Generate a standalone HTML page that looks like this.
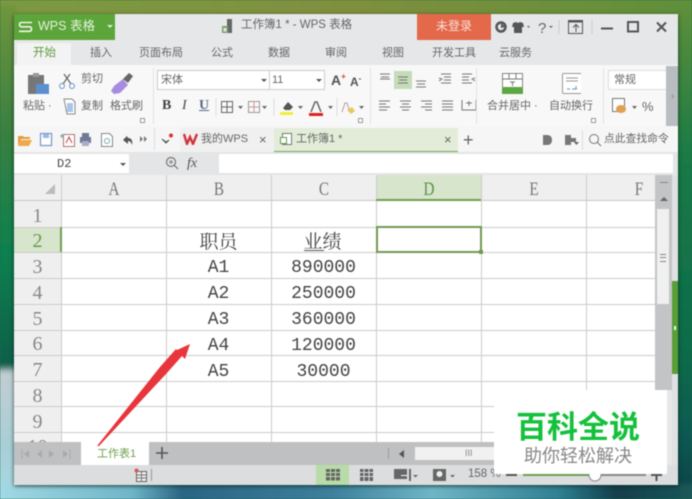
<!DOCTYPE html>
<html><head><meta charset="utf-8">
<style>
html,body{margin:0;padding:0;width:692px;height:499px;overflow:hidden}
body{position:relative;font-family:"Liberation Sans","Noto Sans CJK SC",sans-serif;background:#1c6a4c}
#w{position:absolute;left:0;top:0;width:692px;height:499px;overflow:hidden;filter:blur(.45px)}
.a{position:absolute;white-space:nowrap;line-height:1}
.b{position:absolute}
.t{font-size:11px;color:#666}
.s{font-family:"Liberation Serif","Noto Serif CJK SC",serif;color:#444}
.h{font-size:19px;color:#777;font-family:"Liberation Serif",serif;transform:scaleX(.8);width:40px;text-align:center}
.r{font-size:20px;color:#888;font-family:"Liberation Serif",serif;width:47px;left:14px;text-align:center}
.c{font-size:18px;color:#444;font-family:"Liberation Mono","Noto Serif CJK SC",monospace;width:105px;text-align:center}
.z{font-family:"Liberation Serif","Noto Serif CJK SC",serif;font-size:19px;color:#444}
.hl{position:absolute;left:14px;width:642px;height:1px;background:#ccc}
.vl{position:absolute;top:175px;width:1px;height:267px;background:#ccc}
.k{position:absolute;width:3px;height:3px;border:1px solid #999;background:#fff}
</style></head><body><div id="w">
<svg class="b" style="left:0;top:0" width="692" height="499">
<defs>
<filter id="bl"><feGaussianBlur stdDeviation="2.500"/></filter>
<linearGradient id="g1" x1="0" x2="1"><stop offset="0" stop-color="#7b9a42"/><stop offset=".5" stop-color="#808f3e"/><stop offset="1" stop-color="#5e8f3a"/></linearGradient>
<linearGradient id="g2" x1="0" y1="0" x2="0" y2="1"><stop offset="0" stop-color="#5f8f3a"/><stop offset=".3" stop-color="#1a7a45"/><stop offset=".7" stop-color="#0b6b4a"/><stop offset=".85" stop-color="#0e5a52"/><stop offset="1" stop-color="#103f48"/></linearGradient>
<linearGradient id="g3" x1="0" y1="0" x2="0" y2="1"><stop offset="0" stop-color="#6f953c"/><stop offset=".25" stop-color="#3a8040"/><stop offset=".5" stop-color="#0d8050"/><stop offset=".72" stop-color="#0a5f48"/><stop offset=".735" stop-color="#c2cdd2"/><stop offset=".88" stop-color="#a8ced6"/><stop offset="1" stop-color="#a5dbe6"/></linearGradient>
<linearGradient id="g4" x1="0" x2="1"><stop offset="0" stop-color="#a5dbe6"/><stop offset=".2" stop-color="#6fb5c8"/><stop offset=".27" stop-color="#2a6484"/><stop offset=".48" stop-color="#3d7f9c"/><stop offset=".62" stop-color="#70b5c6"/><stop offset=".8" stop-color="#2f7f92"/><stop offset=".88" stop-color="#123e4a"/><stop offset="1" stop-color="#1c5a5c"/></linearGradient>
</defs>
<g filter="url(#bl)">
<rect x="-10" y="-10" width="712" height="36" fill="url(#g1)"/>
<rect x="-10" y="5" width="26" height="500" fill="url(#g3)"/>
<rect x="676" y="5" width="26" height="500" fill="url(#g2)"/>
<rect x="-10" y="484" width="712" height="26" fill="url(#g4)"/>
</g>
</svg>
<!-- window -->
<div class="b" style="left:14px;top:14px;width:664px;height:471px;background:#e6e7e8;box-shadow:0 1px 4px rgba(0,0,0,.55)"></div>
<!-- title -->
<div class="b" style="left:14px;top:14px;width:101px;height:26px;background:#5ba53a"></div>
<svg class="b" style="left:18px;top:21px" width="16" height="12"><path d="M14 1.500H3.500Q1.500 1.500 1.500 3.500T3.500 5.800H11.500Q13.500 5.800 13.500 8T11.500 10.300H1" fill="none" stroke="#eef5e6" stroke-width="1.600"/></svg>
<div class="a" style="left:38px;top:20px;font-size:12.500px;color:#e6f2dc">WPS 表格</div>
<div class="b" style="left:107px;top:25px;border:3px solid transparent;border-top:3px solid #dbeccd"></div>
<svg class="b" style="left:221px;top:19px" width="14" height="15"><path d="M6 0h5v14H6z" fill="#666"/><path d="M1 7h6v7H1z" fill="#7f9f6e"/><path d="M2.500 9h3v3.500h-3z" fill="#e4e5e6"/></svg>
<div class="a t" style="left:241px;top:20px;font-size:11.500px">工作簿1 * - WPS 表格</div>
<div class="b" style="left:417px;top:14px;width:74px;height:26px;background:#e3694a"></div>
<div class="a" style="left:436px;top:20px;font-size:12px;color:#f8e0d8">未登录</div>
<svg class="b" style="left:495px;top:17px" width="180" height="20">
<circle cx="6" cy="10" r="4.500" fill="none" stroke="#555" stroke-width="2.500"/><path d="M6 6l4 4-4 1z" fill="#555"/>
<path d="M18 6l3-1 2 1 2-1 3 1 1 4-2 0v6h-8v-6h-2z" fill="#555"/><path d="M32 9h3l-1.500 2z" fill="#666"/>
<text x="43" y="16" font-size="15" fill="#666" font-family="Liberation Sans">?</text><path d="M54 9h4l-2 2z" fill="#666"/>
<path d="M64 3v14" stroke="#ccc"/>
<rect x="73.500" y="3.500" width="14" height="13" fill="none" stroke="#555"/><path d="M74 3.500h14v2H74z" fill="#555"/><path d="M81 15V8M78 10.500l3-3 3 3" fill="none" stroke="#555"/>
<path d="M97 3v14" stroke="#ccc"/>
<path d="M106 11.500h12" stroke="#555" stroke-width="2"/>
<rect x="133" y="5" width="10" height="9.500" fill="none" stroke="#555" stroke-width="2"/>
<path d="M162 5.500l9 9M171 5.500l-9 9" stroke="#555" stroke-width="2"/>
</svg>
<!-- tabs -->
<div class="b" style="left:17px;top:43px;width:54px;height:23px;background:#f2f3f2"></div>
<div class="a" style="left:33px;top:48px;font-size:11.500px;color:#5c9a3c">开始</div>
<div class="a t" style="left:90px;top:48px">插入</div>
<div class="a t" style="left:139px;top:48px">页面布局</div>
<div class="a t" style="left:211px;top:48px">公式</div>
<div class="a t" style="left:268px;top:48px">数据</div>
<div class="a t" style="left:325px;top:48px">审阅</div>
<div class="a t" style="left:382px;top:48px">视图</div>
<div class="a t" style="left:432px;top:48px">开发工具</div>
<div class="a t" style="left:499px;top:48px">云服务</div>
<!-- ribbon -->
<div class="b" style="left:14px;top:65px;width:664px;height:61px;background:#f8f8f8"></div>
<div class="b" style="left:666px;top:66px;width:12px;height:60px;background:#b9bcc0"></div>
<svg class="b" style="left:26px;top:70px" width="125" height="50">
<path d="M2 5h16v19H2z" fill="#777"/><path d="M7 3h6v4H7z" fill="#999"/><path d="M10 14h13v10H10z" fill="#5b8fd0"/>
<path d="M38 4l7 10M44 4l-7 10" stroke="#666" stroke-width="1.200"/><circle cx="36" cy="16" r="2.500" fill="none" stroke="#6b93c8"/><circle cx="46" cy="16" r="2.500" fill="none" stroke="#6b93c8"/>
<path d="M88 16l9-7 5 6-8 8-6 1-3-3z" fill="#a88be0"/><path d="M97 9l6-6 4 3-5 7z" fill="#666"/>
<path d="M38 29h8l3 3v12h-8z" fill="#fff" stroke="#888"/><path d="M41 33h6v9h-6z" fill="#a8c6ea"/>
</svg>
<div class="a t" style="left:23px;top:101px">粘贴 ·</div>
<div class="a t" style="left:81px;top:74px">剪切</div>
<div class="a t" style="left:81px;top:101px">复制</div>
<div class="a t" style="left:110px;top:101px">格式刷</div>
<div class="b" style="left:153px;top:68px;width:1px;height:56px;background:#e2e2e2"></div>
<div class="b" style="left:157px;top:70px;width:168px;height:20px;background:#fff;border:1px solid #ccc;box-sizing:border-box"></div>
<div class="b" style="left:269px;top:70px;width:1px;height:20px;background:#ccc"></div>
<div class="a t" style="left:161px;top:75px">宋体</div>
<div class="a t" style="left:272px;top:75px">11</div>
<div class="b" style="left:261px;top:79px;border:3px solid transparent;border-top:3px solid #555"></div>
<div class="b" style="left:316px;top:79px;border:3px solid transparent;border-top:3px solid #555"></div>
<div class="a" style="left:331px;top:73px;font-size:14px;font-weight:bold;color:#555">A<span style="font-size:8px;vertical-align:6px;color:#c44">+</span></div>
<div class="a" style="left:350px;top:75px;font-size:12px;font-weight:bold;color:#555">A<span style="font-size:8px;vertical-align:5px">-</span></div>
<div class="a s" style="left:162px;top:99px;font-size:14px;font-weight:bold">B</div>
<div class="a s" style="left:182px;top:99px;font-size:14px;font-style:italic">I</div>
<div class="a s" style="left:199px;top:99px;font-size:14px;font-weight:bold;text-decoration:underline;color:#5a6a88">U</div>
<svg class="b" style="left:215px;top:96px" width="150" height="22">
<path d="M1 2v18" stroke="#ddd"/><rect x="6.500" y="5.500" width="11" height="11" fill="none" stroke="#666"/><path d="M12 5v12M6 11h12" stroke="#666"/><path d="M23 10h5l-2.500 3z" fill="#666"/>
<rect x="33.500" y="5.500" width="11" height="11" fill="none" stroke="#999"/><path d="M39 5v12M33 11h12" stroke="#c99"/><path d="M47 10h5l-2.500 3z" fill="#666"/>
<path d="M59 2v18" stroke="#ddd"/>
<path d="M68 12l5-6 5 5-3 3h-5z" fill="#555"/><path d="M65 16h13v3H65z" fill="#f1ef3a"/><path d="M83 10h5l-2.500 3z" fill="#666"/>
<path d="M96 16l4-10h2l4 10" fill="none" stroke="#666" stroke-width="1.500"/><path d="M94 17h14v3H94z" fill="#d22"/><path d="M113 10h5l-2.500 3z" fill="#666"/>
<path d="M122 2v18" stroke="#ddd"/>
<path d="M127 16l3-9h2l3 9" fill="none" stroke="#b99"/><path d="M132 14l5-3 3 4-4 3z" fill="#e8c860"/><path d="M144 10h5l-2.500 3z" fill="#666"/>
</svg>
<div class="b" style="left:370px;top:68px;width:1px;height:56px;background:#e2e2e2"></div>
<div class="b" style="left:394px;top:71px;width:18px;height:18px;background:#c4dcb8"></div>
<svg class="b" style="left:378px;top:70px" width="100" height="50" stroke="#777" fill="none">
<path d="M2 4h10M3 7h8M2 9h10M20 7h10M21 10h8M20 13h10M38 11h10M39 14h8M38 17h10"/>
<path d="M63 4h10M66 7h7M66 10h7M63 13h10M61 8l3 1-3 2M84 4h10M84 7h7M84 10h7M84 13h10M97 8l-3 1 3 2"/>
<path d="M1 31h11M1 34h7M1 37h11M1 40h8M22 31h11M24 34h7M22 37h11M24 40h7M43 31h11M47 34h7M43 37h11M47 40h7M64 31h11M64 34h11M64 37h11M64 40h11"/>
<path d="M84 30v10h14V30M84 40h14M88 33h6M91 31v5"/>
</svg>
<div class="b" style="left:476px;top:68px;width:1px;height:56px;background:#e2e2e2"></div>
<svg class="b" style="left:501px;top:71px" width="80" height="25">
<rect x="1.500" y="2.500" width="20" height="20" fill="#fff" stroke="#888"/><path d="M1 16h21v7H1z" fill="#5ea544"/><path d="M1 8h21M8 2v6M15 2v6M9 11h5M11.500 11v4" stroke="#777" fill="none"/>
<rect x="61.500" y="2.500" width="19" height="20" rx="1" fill="#fff" stroke="#999"/><path d="M65 7h12M65 10h12" stroke="#999"/><path d="M66 18h3M71 18h5M75 15v3" stroke="#6b93c8"/>
</svg>
<div class="a t" style="left:487px;top:101px">合并居中 ·</div>
<div class="a t" style="left:549px;top:101px">自动换行</div>
<div class="b" style="left:603px;top:68px;width:1px;height:56px;background:#e2e2e2"></div>
<div class="b" style="left:608px;top:70px;width:58px;height:20px;background:#fff;border:1px solid #ddd;border-right:0;box-sizing:border-box"></div>
<div class="a t" style="left:614px;top:75px">常规</div>
<svg class="b" style="left:611px;top:97px" width="30" height="20"><rect x="1.500" y="1.500" width="12" height="13" fill="#fff" stroke="#777"/><ellipse cx="10" cy="12" rx="5" ry="4" fill="#e0a050"/><path d="M21 9h5l-2.500 3z" fill="#666"/></svg>
<div class="a t" style="left:642px;top:100px;font-size:13px">%</div>
<div class="a" style="left:671px;top:92px;font-size:10px;color:#888">›</div>
<div class="k" style="left:140px;top:118px"></div>
<div class="k" style="left:358px;top:118px"></div>
<div class="k" style="left:591px;top:118px"></div>
<!-- quick access -->
<div class="b" style="left:14px;top:126px;width:664px;height:26px;background:#f6f6f6"></div>
<div class="b" style="left:180px;top:128px;width:94px;height:24px;background:#f0f0f0"></div>
<div class="b" style="left:274px;top:128px;width:184px;height:24px;background:#e2ecd8;border-bottom:1.500px solid #79a65c;box-sizing:border-box"></div>
<svg class="b" style="left:17px;top:131px" width="150" height="17">
<path d="M1 5h5l1 1h6v2H4l-3 6z" fill="#e29b3e"/><path d="M3 9h12l-3 6H1z" fill="#efa84a"/>
<rect x="23.500" y="2.500" width="11" height="12" fill="#fff" stroke="#7d9bcf" stroke-width="1.300"/><path d="M26 3h6v4h-6z" fill="#9fb7de"/>
<rect x="46.500" y="3.500" width="11" height="12" fill="#fff" stroke="#a77"/><path d="M43 5h4M45 3v4" stroke="#6a9"/><path d="M49 12l3-6 3 6" fill="none" stroke="#c44"/>
<path d="M65 2h7v4h-7zM63 6h11v6h-11z" fill="#707898"/><path d="M65 10h7v5h-7z" fill="#a8aec4"/>
<path d="M84.500 2.500h8l3 3v10h-11z" fill="#fff" stroke="#888"/><circle cx="90" cy="10" r="2.500" fill="none" stroke="#7aa"/>
<path d="M106 9l4-4 1 2c3 0 5 2 4 7-1-3-2-4-4-4l0 3z" fill="#555"/>
<path d="M123 5l3 3-3 3zM127 5l3 3-3 3z" fill="#777"/>
</svg>
<div class="b" style="left:154px;top:128px;width:1px;height:22px;background:#ddd"></div>
<svg class="b" style="left:160px;top:132px" width="14" height="14"><path d="M2 7l4 3 3-2-3 3z" fill="#555" stroke="#555"/><circle cx="11" cy="3.500" r="2" fill="#d33"/></svg>
<svg class="b" style="left:183px;top:133px" width="15" height="12"><path d="M1 1l3 10 3-7 3 7 4-10" fill="none" stroke="#d4343c" stroke-width="2.400"/></svg>
<div class="a t" style="left:201px;top:134px">我的WPS</div>
<div class="a" style="left:259px;top:133px;font-size:13px;color:#666">×</div>
<svg class="b" style="left:279px;top:132px" width="14" height="14"><rect x="3.500" y="1.500" width="9" height="11" fill="#fff" stroke="#777"/><rect x="1.500" y="5.500" width="6" height="6" fill="#fff" stroke="#6a9a50"/></svg>
<div class="a t" style="left:296px;top:134px">工作簿1 *</div>
<div class="a" style="left:444px;top:133px;font-size:13px;color:#666">×</div>
<div class="a" style="left:463px;top:131px;font-size:18px;color:#666">+</div>
<svg class="b" style="left:541px;top:133px" width="44" height="14"><path d="M2 2h4q5 0 5 5t-5 5H2z" fill="#777"/><path d="M24 2h6v10h-6zM30 5h5v4h-5z" fill="#777"/><path d="M33 9h5l-2.500 3z" fill="#666"/></svg>
<div class="b" style="left:582px;top:130px;width:1px;height:20px;background:#ddd"></div>
<svg class="b" style="left:588px;top:133px" width="14" height="14"><circle cx="6" cy="6" r="4.500" fill="none" stroke="#777"/><path d="M9 9l4 4" stroke="#777"/></svg>
<div class="a t" style="left:604px;top:134px;font-size:10.800px">点此查找命令</div>
<!-- formula bar -->
<div class="b" style="left:14px;top:152px;width:664px;height:23px;background:#e4e5e6"></div>
<div class="b" style="left:14px;top:154px;width:115px;height:19px;background:#fff"></div>
<div class="b" style="left:219px;top:154px;width:454px;height:19px;background:#fff"></div>
<div class="a s" style="left:57px;top:158px;font-size:12px;font-family:'Liberation Mono'">D2</div>
<div class="b" style="left:120px;top:163px;border:3px solid transparent;border-top:3px solid #555"></div>
<svg class="b" style="left:165px;top:156px" width="14" height="14"><circle cx="6" cy="6" r="4.500" fill="none" stroke="#777" stroke-width="1.200"/><path d="M9 9l4 4" stroke="#777" stroke-width="1.200"/><circle cx="6" cy="6" r="1.800" fill="#999"/></svg>
<div class="a" style="left:187px;top:156px;font:italic 14px 'Liberation Serif',serif;color:#555">fx</div>
<!-- grid -->
<div class="b" style="left:14px;top:175px;width:642px;height:267px;background:#fff"></div>
<div class="b" style="left:14px;top:175px;width:642px;height:25px;background:#efeff0"></div>
<div class="b" style="left:14px;top:200px;width:48px;height:242px;background:#efeff0"></div>
<div class="b" style="left:14px;top:227px;width:47px;height:25px;background:#d6e5cc"></div>
<div class="b" style="left:376px;top:175px;width:105px;height:25px;background:#d6e5cc"></div>
<svg class="b" style="left:44px;top:183px" width="12" height="12"><path d="M11 1v10H1z" fill="#bbb"/></svg>
<div class="hl" style="top:200px;background:#c8c8c8"></div>
<div class="hl" style="top:227px"></div>
<div class="hl" style="top:252px"></div>
<div class="hl" style="top:278px"></div>
<div class="hl" style="top:304px"></div>
<div class="hl" style="top:330px"></div>
<div class="hl" style="top:355px"></div>
<div class="hl" style="top:381px"></div>
<div class="hl" style="top:406px"></div>
<div class="hl" style="top:432px"></div>
<div class="vl" style="left:61px"></div>
<div class="vl" style="left:166px"></div>
<div class="vl" style="left:271px"></div>
<div class="vl" style="left:376px"></div>
<div class="vl" style="left:481px"></div>
<div class="vl" style="left:586px"></div>
<div class="b" style="left:376px;top:199px;width:105px;height:2px;background:#70a050"></div>
<div class="b" style="left:60px;top:227px;width:2px;height:25px;background:#70a050"></div>
<div class="a h" style="left:94px;top:180px">A</div>
<div class="a h" style="left:199px;top:180px">B</div>
<div class="a h" style="left:304px;top:180px">C</div>
<div class="a h" style="left:409px;top:180px;color:#5f8f48">D</div>
<div class="a h" style="left:514px;top:180px">E</div>
<div class="a h" style="left:619px;top:180px">F</div>
<div class="a r" style="top:206px">1</div>
<div class="a r" style="top:231px;color:#6a9a50">2</div>
<div class="a r" style="top:257px">3</div>
<div class="a r" style="top:283px">4</div>
<div class="a r" style="top:309px">5</div>
<div class="a r" style="top:334px">6</div>
<div class="a r" style="top:360px">7</div>
<div class="a r" style="top:386px">8</div>
<div class="a r" style="top:412px">9</div>
<div class="a r" style="top:437px;height:5px;overflow:hidden">10</div>
<div class="a c z" style="left:166px;top:233px;font-size:19px">职员</div>
<div class="a c z" style="left:270px;top:233px;font-size:19px">业绩</div>
<div class="b" style="left:304px;top:250px;width:20px;height:1px;background:#555"></div>
<div class="a c" style="left:166px;top:259px">A1</div><div class="a c" style="left:271px;top:259px">890000</div>
<div class="a c" style="left:166px;top:285px">A2</div><div class="a c" style="left:271px;top:285px">250000</div>
<div class="a c" style="left:166px;top:311px">A3</div><div class="a c" style="left:271px;top:311px">360000</div>
<div class="a c" style="left:166px;top:337px">A4</div><div class="a c" style="left:271px;top:337px">120000</div>
<div class="a c" style="left:166px;top:363px">A5</div><div class="a c" style="left:271px;top:363px">30000</div>
<div class="b" style="left:376px;top:226px;width:106px;height:27px;border:2px solid #6f9a50;box-sizing:border-box"></div>
<div class="b" style="left:479px;top:250px;width:4px;height:4px;background:#6f9a50"></div>
<!-- vertical scrollbar -->
<div class="b" style="left:655px;top:175px;width:17px;height:215px;background:#c3c4c5"></div>
<div class="b" style="left:672px;top:175px;width:6px;height:290px;background:#e0e1e2"></div>
<div class="b" style="left:657px;top:209px;width:12px;height:95px;background:#f0f0f1"></div>
<div class="b" style="left:660px;top:182px;width:8px;height:1px;background:#888"></div>
<div class="b" style="left:660px;top:197px;border:4px solid transparent;border-bottom:4px solid #666;border-top:0"></div>
<div class="b" style="left:660px;top:254px;width:6px;height:6px;border-top:1px solid #888;border-bottom:1px solid #888"></div>
<div class="b" style="left:660px;top:257px;width:6px;height:1px;background:#888"></div>
<div class="b" style="left:672px;top:281px;width:6px;height:93px;background:#5a9e38"></div>
<div class="b" style="left:674px;top:326px;width:2px;height:4px;background:#dfe"></div>
<!-- sheet bar -->
<div class="b" style="left:14px;top:442px;width:642px;height:23px;background:#bfc0c1"></div>
<div class="b" style="left:81px;top:442px;width:68px;height:23px;background:#fff"></div>
<svg class="b" style="left:20px;top:447px" width="56" height="14" fill="#aaa"><path d="M2 2v10" stroke="#aaa"/><path d="M9 3v8l-5-4zM22 3v8l-5-4zM29 3v8l5-4zM43 3v8l5-4z"/><path d="M50 2v10" stroke="#aaa"/></svg>
<div class="a" style="left:97px;top:449px;font-size:11px;color:#6fa050">工作表1</div>
<svg class="b" style="left:155px;top:446px" width="14" height="14"><path d="M7 1v12M1 7h12" stroke="#555" stroke-width="1.600"/></svg>
<div class="b" style="left:388px;top:448px;width:1px;height:11px;background:#999"></div>
<div class="b" style="left:399px;top:450px;border:4px solid transparent;border-right:5px solid #555;border-left:0"></div>
<div class="b" style="left:415px;top:447px;width:79px;height:13px;background:#f1f1f2"></div>
<div class="a" style="left:465px;top:449px;font-size:9px;color:#888">III</div>
<!-- status bar -->
<div class="b" style="left:14px;top:465px;width:664px;height:20px;background:#dcddde"></div>
<div class="b" style="left:316px;top:465px;width:33px;height:20px;background:#b9dba8"></div>
<svg class="b" style="left:134px;top:468px" width="20" height="16"><rect x="2.500" y="3.500" width="10" height="10" fill="#eee" stroke="#666"/><path d="M3 7h10M3 10h10M7.500 4v10" stroke="#777"/><circle cx="2.500" cy="2.500" r="2" fill="#d55"/></svg>
<div class="b" style="left:151px;top:469px;width:1px;height:12px;background:#999"></div>
<svg class="b" style="left:325px;top:468px" width="340" height="16" fill="#666">
<rect x="1" y="1" width="14" height="11.500"/><path d="M1 4.500h14M1 8.500h14M5.500 1v12M10.500 1v12" stroke="#b9dba8" fill="none"/>
<rect x="35" y="1" width="13" height="12"/><path d="M35 4.500h13M35 8.500h13M39 1v12M44 1v12" stroke="#dcddde" fill="none"/>
<rect x="69" y="1" width="13" height="10"/><path d="M76 7h6v1h-6z" fill="#fff"/><rect x="84" y="1" width="2" height="12"/><path d="M88 7h5l-2.500 2.500z"/>
<rect x="108" y="1" width="13" height="12"/><circle cx="114.500" cy="6" r="3" fill="#eee"/><path d="M125 7h5l-2.500 2.500z"/>
<path d="M181 7h11" stroke="#555" stroke-width="2"/>
<path d="M198 7h66" stroke="#6f9e50" stroke-width="2"/><path d="M264 7h57" stroke="#888" stroke-width="2"/>
<circle cx="270" cy="7" r="6" fill="#fff" stroke="#888"/>
<path d="M326 7h11M331.500 2v11" stroke="#555" stroke-width="2"/>
</svg>
<div class="a" style="left:468px;top:469px;font-size:11.500px;color:#666">158 %</div>
<!-- arrow -->
<svg class="b" style="left:0;top:0" width="692" height="499"><path d="M97 446L160 367 176 349 177 350 190 344 185 359 182 356 166 374 99 446z" fill="#e8353b"/></svg>
<!-- watermark -->
<div class="b" style="left:494px;top:390px;width:173px;height:84px;background:#fff"></div>
<div class="a" style="left:516px;top:408px;font-size:31px;font-weight:bold;color:#14c13c;font-family:'Noto Sans CJK SC',sans-serif;line-height:34px">百科全说</div>
<div class="a" style="left:524px;top:445px;font-size:18px;color:#888;font-family:'Noto Sans CJK SC',sans-serif;line-height:20px">助你轻松解决</div>
</div></body></html>
